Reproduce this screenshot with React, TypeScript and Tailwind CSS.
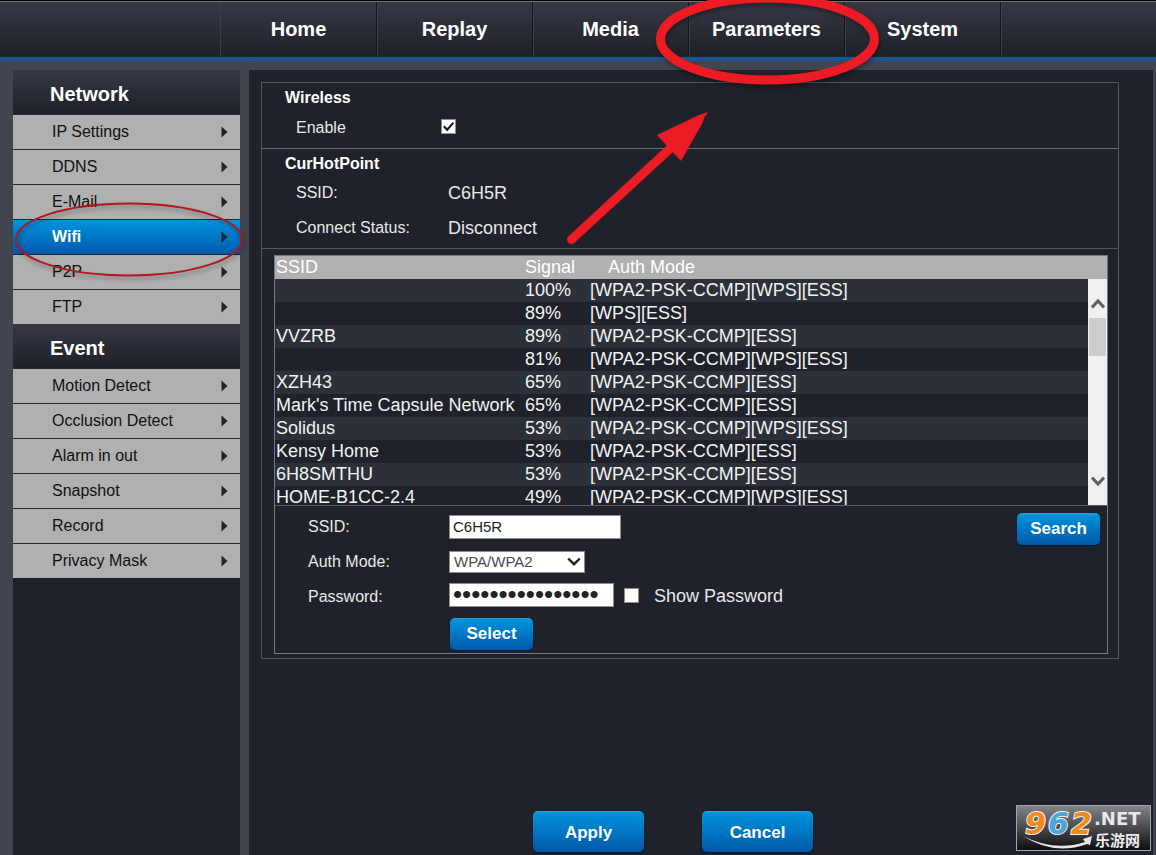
import { useState } from 'react';

const navItems = ['Home', 'Replay', 'Media', 'Parameters', 'System'];

const menus = [
  { title: 'Network', items: ['IP Settings', 'DDNS', 'E-Mail', 'Wifi', 'P2P', 'FTP'] },
  {
    title: 'Event',
    items: ['Motion Detect', 'Occlusion Detect', 'Alarm in out', 'Snapshot', 'Record', 'Privacy Mask'],
  },
];

const hotspots = [
  { ssid: '', signal: '100%', auth: '[WPA2-PSK-CCMP][WPS][ESS]' },
  { ssid: '', signal: '89%', auth: '[WPS][ESS]' },
  { ssid: 'VVZRB', signal: '89%', auth: '[WPA2-PSK-CCMP][ESS]' },
  { ssid: '', signal: '81%', auth: '[WPA2-PSK-CCMP][WPS][ESS]' },
  { ssid: 'XZH43', signal: '65%', auth: '[WPA2-PSK-CCMP][ESS]' },
  { ssid: "Mark's Time Capsule Network", signal: '65%', auth: '[WPA2-PSK-CCMP][ESS]' },
  { ssid: 'Solidus', signal: '53%', auth: '[WPA2-PSK-CCMP][WPS][ESS]' },
  { ssid: 'Kensy Home', signal: '53%', auth: '[WPA2-PSK-CCMP][ESS]' },
  { ssid: '6H8SMTHU', signal: '53%', auth: '[WPA2-PSK-CCMP][ESS]' },
  { ssid: 'HOME-B1CC-2.4', signal: '49%', auth: '[WPA2-PSK-CCMP][WPS][ESS]' },
];

function Header() {
  return (
    <header className="border-t border-black border-b-4 border-b-[#1b5690] bg-[#1e2129]">
      <div className="border-t border-[#74757b] bg-linear-to-b from-[#363944] to-[#1e2128]">
        <nav className="flex h-[55px] pl-[220px]">
          {navItems.map((item, i) => (
            <a
              key={item}
              href="#"
              className={`flex items-center justify-center border-r border-r-[#16181d] pb-0.5 text-xl font-bold text-white shadow-[1px_0_0_#3b3e47] ${
                i === 0 ? 'w-[157px] border-l border-l-[#3b3e47]' : 'w-[156px]'
              }`}
            >
              {item}
            </a>
          ))}
        </nav>
      </div>
    </header>
  );
}

function Sidebar() {
  return (
    <aside className="w-[227px] shrink-0 bg-[#1f222a]">
      {menus.map((menu) => (
        <section key={menu.title}>
          <h2 className="flex h-11 items-center bg-linear-to-b from-[#363944] to-[#1e2128] pt-1 pl-[37px] text-xl font-bold text-white">
            {menu.title}
          </h2>
          <ul>
            {menu.items.map((item) => (
              <li key={item}>
                <a
                  href="#"
                  className={`flex h-[35px] items-center justify-between border-t border-[#24272e] pr-3 pl-[39px] ${
                    item === 'Wifi'
                      ? 'bg-linear-to-b from-[#0294dd] to-[#005aae] font-bold text-white'
                      : 'bg-[#b0b0b0] text-[#111]'
                  }`}
                >
                  {item}
                  <svg width="7" height="12" viewBox="0 0 7 12" fill="#1f222a">
                    <path d="M0.5 0.5 L6.5 6 L0.5 11.5 Z" />
                  </svg>
                </a>
              </li>
            ))}
          </ul>
        </section>
      ))}
    </aside>
  );
}

function CheckBox({ id, checked, onChange }: { id: string; checked: boolean; onChange: (v: boolean) => void }) {
  return (
    <span className="relative mb-[3px] flex size-[15px]">
      <input
        id={id}
        type="checkbox"
        checked={checked}
        onChange={(e) => onChange(e.target.checked)}
        className="size-full appearance-none border border-[#8d8d8d] bg-white"
      />
      {checked && (
        <svg className="pointer-events-none absolute inset-0" width="15" height="15" viewBox="0 0 15 15" fill="none">
          <path d="M2.8 7.2 L6.2 10.8 L12.4 3.6" stroke="#222" strokeWidth="2.2" />
        </svg>
      )}
    </span>
  );
}

function BlueButton({ label, big }: { label: string; big?: boolean }) {
  return (
    <button
      type="button"
      className={`rounded-[5px] border-t border-[#2b9fd6] bg-linear-to-b from-[#0294dc] to-[#0057aa] text-[17px] font-bold text-white shadow-[0_1px_2px_#0a1a2c] ${
        big ? 'h-[41px] w-[111px] pt-0.5' : 'h-8 w-[83px] pb-0.5'
      }`}
    >
      {label}
    </button>
  );
}

function ScrollBar() {
  return (
    <div className="absolute top-[23px] right-0 bottom-0 flex w-[19px] flex-col items-center bg-[#f0f0f0] pt-[19px] pb-[18px]">
      <svg width="14" height="11" viewBox="0 0 14 11" fill="none">
        <path d="M1 9.5 L7 3 L13 9.5" stroke="#606060" strokeWidth="3" />
      </svg>
      <div className="mt-[9px] h-[38px] w-[17px] bg-[#cdcdcd]" />
      <svg className="mt-auto" width="14" height="12" viewBox="0 0 14 12" fill="none">
        <path d="M1 2.5 L7 9 L13 2.5" stroke="#606060" strokeWidth="3" />
      </svg>
    </div>
  );
}

function HotspotTable() {
  return (
    <div className="relative h-[250px] overflow-hidden border-b border-[#5d5e61]">
      <table className="w-full table-fixed border-collapse text-lg leading-[23px] text-[#f2f2f2]">
        <thead>
          <tr className="h-[23px] bg-[#b0b0b0] text-left text-white">
            <th className="w-[249px] p-0 pl-px font-normal">SSID</th>
            <th className="w-[65px] p-0 pl-px font-normal">Signal</th>
            <th className="p-0 pl-[19px] font-normal">Auth Mode</th>
          </tr>
        </thead>
        <tbody>
          {hotspots.map((h, i) => (
            <tr key={i} className="h-[23px] whitespace-nowrap odd:bg-[#2c3038]">
              <td className="p-0 pl-px">{h.ssid}</td>
              <td className="p-0 pl-px">{h.signal}</td>
              <td className="p-0 pl-px">{h.auth}</td>
            </tr>
          ))}
        </tbody>
      </table>
      <ScrollBar />
    </div>
  );
}

function WifiForm() {
  const [ssid, setSsid] = useState('C6H5R');
  const [password, setPassword] = useState('abcdefgh12345678');
  const [show, setShow] = useState(false);

  return (
    <div className="flex items-start justify-between pt-[3px] pr-[7px] pb-[3px] pl-[33px]">
      <div>
        <div className="flex h-[35px] items-center">
          <label htmlFor="ssid" className="w-[141px]">SSID:</label>
          <input
            id="ssid"
            value={ssid}
            onChange={(e) => setSsid(e.target.value)}
            className="h-6 w-[172px] border border-[#8d8d8d] bg-white px-[3px] text-[15px] text-[#222]"
          />
        </div>
        <div className="flex h-[35px] items-center">
          <label htmlFor="auth" className="w-[141px]">Auth Mode:</label>
          <div className="relative">
            <select
              id="auth"
              className="block h-[22px] w-[136px] appearance-none border border-[#8d8d8d] bg-white px-1 text-[15px] leading-5 text-[#4a4a55]"
            >
              <option>WPA/WPA2</option>
              <option>WEP</option>
              <option>None</option>
            </select>
            <svg className="pointer-events-none absolute top-[6px] right-1" width="14" height="10" viewBox="0 0 14 10" fill="none">
              <path d="M1.2 1.5 L7 7.2 L12.8 1.5" stroke="#222" strokeWidth="2.4" />
            </svg>
          </div>
        </div>
        <div className="flex h-[35px] items-center">
          <label htmlFor="password" className="w-[141px]">Password:</label>
          <input
            id="password"
            type={show ? 'text' : 'password'}
            value={password}
            onChange={(e) => setPassword(e.target.value)}
            className={`mr-[10px] mb-1 h-6 w-[165px] border border-[#8d8d8d] bg-white px-[3px] text-[#222] ${
              show ? 'text-[15px]' : 'text-[26px] leading-[22px]'
            }`}
          />
          <CheckBox id="show" checked={show} onChange={setShow} />
          <label htmlFor="show" className="mb-0.5 pl-[15px] text-lg">Show Password</label>
        </div>
        <div className="pt-1 pl-[142px]">
          <BlueButton label="Select" />
        </div>
      </div>
      <div className="pt-1">
        <BlueButton label="Search" />
      </div>
    </div>
  );
}

function WifiPanel() {
  const [enabled, setEnabled] = useState(true);

  return (
    <div className="border border-[#555659]">
      <section className="border-b border-[#6a6b6d] pt-[3px] pb-[3px]">
        <h3 className="pl-[23px] leading-6 font-bold text-white">Wireless</h3>
        <div className="flex h-[35px] items-center pl-[34px]">
          <label htmlFor="enable" className="w-[145px]">Enable</label>
          <CheckBox id="enable" checked={enabled} onChange={setEnabled} />
        </div>
      </section>
      <section className="border-b border-[#555659] pt-[3px] pb-[2px]">
        <h3 className="pl-[23px] leading-6 font-bold text-white">CurHotPoint</h3>
        <div className="flex h-[35px] items-center pb-0.5 pl-[34px]">
          <span className="w-[152px]">SSID:</span>
          <span className="text-lg">C6H5R</span>
        </div>
        <div className="flex h-[35px] items-center pb-0.5 pl-[34px]">
          <span className="w-[152px]">Connect Status:</span>
          <span className="text-lg">Disconnect</span>
        </div>
      </section>
      <section className="pt-[6px] pr-[10px] pb-1 pl-3">
        <div className="border border-[#767889]">
          <HotspotTable />
          <WifiForm />
        </div>
      </section>
    </div>
  );
}

// hand drawn marks that point at Parameters > Wifi
function Marks() {
  return (
    <svg
      className="pointer-events-none absolute top-0 left-0"
      width="900"
      height="300"
      viewBox="0 0 900 300"
      fill="none"
    >
      <g className="drop-shadow-[1px_3px_2px_rgba(0,0,0,0.35)]">
        <ellipse cx="767.5" cy="39" rx="107" ry="41" stroke="#ed1c24" strokeWidth="9" />
        <ellipse cx="129" cy="239.5" rx="113" ry="36" stroke="#b3161b" strokeWidth="1.8" />
      </g>
      <path d="M571.5 239.5 L674 145" stroke="#ed1c24" strokeWidth="9" strokeLinecap="round" />
      <path d="M708 112 L699 115 L657 135 L681 161 L703 122 L704 118 Z" fill="#ed1c24" />
    </svg>
  );
}

function Watermark() {
  return (
    <svg className="absolute right-[5px] bottom-1" width="135" height="46" viewBox="0 0 135 46">
      <defs>
        <linearGradient id="plate" x1="0" y1="0" x2="0" y2="1">
          <stop offset="0" stopColor="#85868a" />
          <stop offset="0.5" stopColor="#48494d" />
          <stop offset="1" stopColor="#0c0d0f" />
        </linearGradient>
      </defs>
      <rect x="0.5" y="0.5" width="134" height="45" fill="url(#plate)" stroke="#a5a6a9" />
      <g
        fontFamily="DejaVu Sans"
        fontWeight="bold"
        fontStyle="italic"
        fontSize="30"
        stroke="#f4f4f4"
        strokeWidth="2"
        paintOrder="stroke"
      >
        <text x="9" y="29" fill="#f08a1d">9</text>
        <text x="32" y="29" fill="#4ba5dd">6</text>
        <text x="55" y="29" fill="#f08a1d">2</text>
      </g>
      <path d="M7 31 Q38 47 69 37 L67 34 L76 31 L74 40 L71 39 Q38 51 7 31 Z" fill="#e4e4e4" />
      <text x="78" y="20" fontFamily="DejaVu Sans" fontWeight="bold" fontSize="18" fill="#e8e8e8">.NET</text>
      <text x="79" y="41" fontFamily="Noto Sans CJK SC, sans-serif" fontWeight="bold" fontSize="15" fill="#ececec">
        乐游网
      </text>
    </svg>
  );
}

export default function App() {
  return (
    <div className="relative flex min-h-screen flex-col overflow-hidden bg-[#424550] font-['Liberation_Sans',Arial,sans-serif] text-base text-[#e8e8e8]">
      <Header />
      <div className="flex grow gap-[9px] pt-[9px] pr-[3px] pl-[13px]">
        <Sidebar />
        <main className="flex grow flex-col bg-[#1f222a] pt-3 pr-[34px] pb-[3px] pl-3">
          <WifiPanel />
          <div className="mt-auto flex gap-[58px] pt-6 pl-[272px]">
            <BlueButton label="Apply" big />
            <BlueButton label="Cancel" big />
          </div>
        </main>
      </div>
      <Marks />
      <Watermark />
    </div>
  );
}
